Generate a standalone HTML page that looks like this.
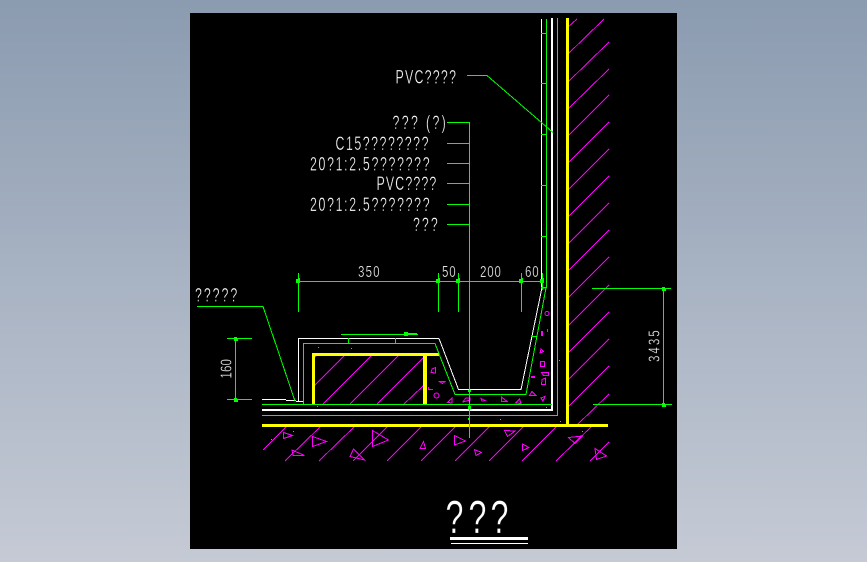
<!DOCTYPE html>
<html lang="en">
<head>
<meta charset="utf-8">
<title>CAD drawing</title>
<style>
html,body{margin:0;padding:0;width:867px;height:562px;overflow:hidden;background:linear-gradient(180deg,#8b9bb0 0%,#a8b3c3 50%,#c5cad5 100%);}
svg{position:absolute;left:0;top:0;display:block;}
text{font-family:"Liberation Sans",sans-serif;fill:#fff;stroke:#000;stroke-width:.35px;paint-order:fill stroke;}
</style>
</head>
<body>
<svg width="867" height="562" viewBox="0 0 867 562" xmlns="http://www.w3.org/2000/svg">
<rect x="190" y="13" width="487" height="536" fill="#000"/>

<!-- magenta hatching -->
<g stroke="#f0f" stroke-width="1" fill="none" shape-rendering="crispEdges">
<path d="M567 28L577 19M567 55L604 19M567 83L609 42M567 110L609 69M567 137L609 95M567 164L609 122M567 191L609 149M567 218L609 176M567 245L609 203M567 272L609 230M567 299L609 257M567 327L609 285M567 354L609 312M567 381L609 339M567 408L609 366M577 425L609 394"/>
<path d="M263 450L287 426M285 461L322 425M319 461L356 425M353 461L389 425M387 461L423 425M421 461L457 425M455 461L491 425M489 461L525 425M522 461L558 425M556 461L593 425M590 461L609 442"/>
<path d="M313 359L318 354M313 387L346 354M323 404L373 354M350 404L400 354M377 404L423 358M403 405L423 386"/>
<!-- triangles -->
<path d="M283.5 432.5V438.5L292.5 435.5ZM312.5 436.5V446.5L326.5 441.5ZM292 450L293 455.5H304.5ZM350 456.5L353.5 449L364.5 460ZM372.5 430.5V446.5L388.5 440ZM420 448.5L423.5 441.5L425.5 448.5ZM454.5 435.5V445L465.5 441ZM474.5 449.5L476 455.5L481.5 452.5ZM504.5 430.5L507.5 436.5L515 431ZM522.5 444V450.5L529 447.5ZM568.5 437.5L575 443.5L582.5 436ZM595 448.5L596.5 459.5L606.5 456Z"/>
<!-- concrete aggregate -->
<path d="M541 349L543.5 351.5L540 353ZM540.5 361.5H544.5V366.5H540.5ZM541.5 372.5H548.5V375.5L543.5 375.5ZM542 379.5L545.5 378V384.5H541.5ZM529.5 395.5L532 391.5L536 395.5ZM541 398L545 396.5L543 401ZM515.5 403L519.5 399L521 403.5ZM501.5 397V401.5H507ZM481 398.5L485 400.5L482 401ZM463 401.5L466 398H470V400L463 402ZM447.5 402.5L452 398V403ZM439.5 381.5H445L442.5 383.5ZM431 372.5L432 369L435.5 367.5V373ZM428.5 387V389.5H433"/>
<circle cx="547" cy="313.5" r="2"/>
<circle cx="436.5" cy="395.5" r="2.5"/>
</g>
<g fill="#f0f" shape-rendering="crispEdges">
<rect x="541" y="331" width="2" height="5"/>
<rect x="547" y="329" width="1" height="3"/>
<rect x="531" y="376" width="4" height="2"/>
</g>

<!-- yellow -->
<g fill="#ff0" shape-rendering="crispEdges">
<rect x="566" y="18" width="3" height="407"/>
<rect x="262" y="424" width="346" height="3"/>
<rect x="312" y="353" width="127" height="3"/>
<rect x="312" y="353" width="3" height="51"/>
<rect x="423" y="353" width="4" height="51"/>
</g>

<!-- white -->
<g fill="none" stroke="#fff" stroke-width="1">
<path shape-rendering="crispEdges" d="M541.5 19V270M262 399.5H286M286 400.5H296M296 401.5H303M298.5 338V401M298 338.5H439"/>
<path shape-rendering="crispEdges" d="M439 338.5L458.5 389.5H521L541.5 290V270"/>
</g>
<g fill="#fff" shape-rendering="crispEdges">
<rect x="551" y="18" width="2" height="393"/>
<rect x="262" y="409" width="291" height="2"/>
<rect x="450" y="537" width="78" height="3"/>
<rect x="451" y="543" width="77" height="1"/>
</g>

<!-- green -->
<g fill="none" stroke="#0f0" stroke-width="1" shape-rendering="crispEdges">
<path d="M262 404.5H552M262 415.5H557.5V18M546.5 19V288M303.5 343V404M303 343.5H435L455 394.5H526L546 288H541"/>
<path d="M348.5 338V343M395.5 338V343M532 336.5H537"/>
<path d="M541 33.5H546M541 83.5H546M541 134.5H546M541 185.5H546M541 236.5H546M541 287.5H546"/>
<path d="M469.5 122V438M447 122.5H469M447 143.5H469M447 163.5H469M447 183.5H469M447 204.5H469M447 224.5H469"/>
<path d="M467 75.5H487L553 132.5"/>
<path d="M197 306.5H263L295 401"/>
<path d="M298 281.5H542M298.5 273V312M438.5 273V312M458.5 273V312M521.5 273V312M542.5 273V290"/>
<path d="M235.5 338V399M227 338.5H252M227 399.5H252"/>
<path d="M663.5 288V404M592 288.5H671M593 404.5H672"/>
<path d="M341 334.5H418"/>
</g>
<g fill="#0f0" shape-rendering="crispEdges">
<rect x="404" y="333" width="13" height="2"/>
<rect x="404" y="332" width="4" height="4"/>
<rect x="296" y="279" width="4" height="4"/><rect x="298" y="278" width="2" height="2"/>
<rect x="436" y="279" width="4" height="4"/><rect x="438" y="278" width="2" height="2"/>
<rect x="456" y="279" width="4" height="4"/><rect x="458" y="278" width="2" height="2"/>
<rect x="519" y="279" width="4" height="4"/><rect x="521" y="278" width="2" height="2"/>
<rect x="540" y="279" width="4" height="4"/><rect x="542" y="278" width="2" height="2"/>
<rect x="234" y="337" width="3" height="4"/><rect x="236" y="339" width="2" height="2"/>
<rect x="234" y="398" width="3" height="4"/><rect x="236" y="400" width="2" height="2"/>
<rect x="662" y="287" width="3" height="4"/><rect x="664" y="289" width="2" height="2"/>
<rect x="662" y="403" width="3" height="4"/><rect x="664" y="405" width="2" height="2"/>
<rect x="318" y="347" width="1" height="1"/><rect x="351" y="348" width="1" height="1"/>
<rect x="317" y="406" width="1" height="1"/><rect x="293" y="431" width="1" height="1"/>
<rect x="271" y="439" width="1" height="1"/><rect x="559" y="360" width="1" height="1"/>
<rect x="546" y="407" width="1" height="1"/><rect x="500" y="419" width="1" height="1"/>
<rect x="560" y="421" width="1" height="1"/><rect x="582" y="431" width="1" height="1"/>
<rect x="468" y="390" width="3" height="2"/><rect x="468" y="406" width="3" height="3"/>
<rect x="468" y="418" width="2" height="2"/>
</g>

<!-- text: narrowed glyphs with open spacing, like the CAD stroke font -->
<g font-size="19">
<text transform="translate(395.5 83.5) scale(.65 1)" textLength="93" lengthAdjust="spacing">PVC????</text>
<text transform="translate(392.5 129) scale(.65 1)" textLength="82" lengthAdjust="spacing">??? (?)</text>
<text transform="translate(335.5 150) scale(.65 1)" textLength="143" lengthAdjust="spacing">C15????????</text>
<text transform="translate(310 170.5) scale(.65 1)" textLength="184" lengthAdjust="spacing">20?1:2.5???????</text>
<text transform="translate(376.5 190) scale(.65 1)" textLength="92" lengthAdjust="spacing">PVC????</text>
<text transform="translate(310 211) scale(.65 1)" textLength="184" lengthAdjust="spacing">20?1:2.5???????</text>
<text transform="translate(413 231) scale(.65 1)" textLength="38" lengthAdjust="spacing">???</text>
<text transform="translate(195 301.5) scale(.65 1)" textLength="65" lengthAdjust="spacing">?????</text>
</g>
<g font-size="16">
<text transform="translate(358 277) scale(.72 1)" textLength="30" lengthAdjust="spacing">350</text>
<text transform="translate(442 277) scale(.72 1)" textLength="19" lengthAdjust="spacing">50</text>
<text transform="translate(480 277) scale(.72 1)" textLength="29" lengthAdjust="spacing">200</text>
<text transform="translate(525 277) scale(.72 1)" textLength="19" lengthAdjust="spacing">60</text>
<text transform="translate(231.5 378.5) rotate(-90) scale(.72 1)" textLength="27" lengthAdjust="spacing">160</text>
<text transform="translate(659.5 362) rotate(-90) scale(.72 1)" textLength="44" lengthAdjust="spacing">3435</text>
</g>
<g font-size="46" style="stroke-width:3.4px">
<text transform="translate(445.5 533) scale(.7 1)">?</text>
<text transform="translate(468.5 533) scale(.7 1)">?</text>
<text transform="translate(490.5 533) scale(.7 1)">?</text>
</g>
</svg>
</body>
</html>
